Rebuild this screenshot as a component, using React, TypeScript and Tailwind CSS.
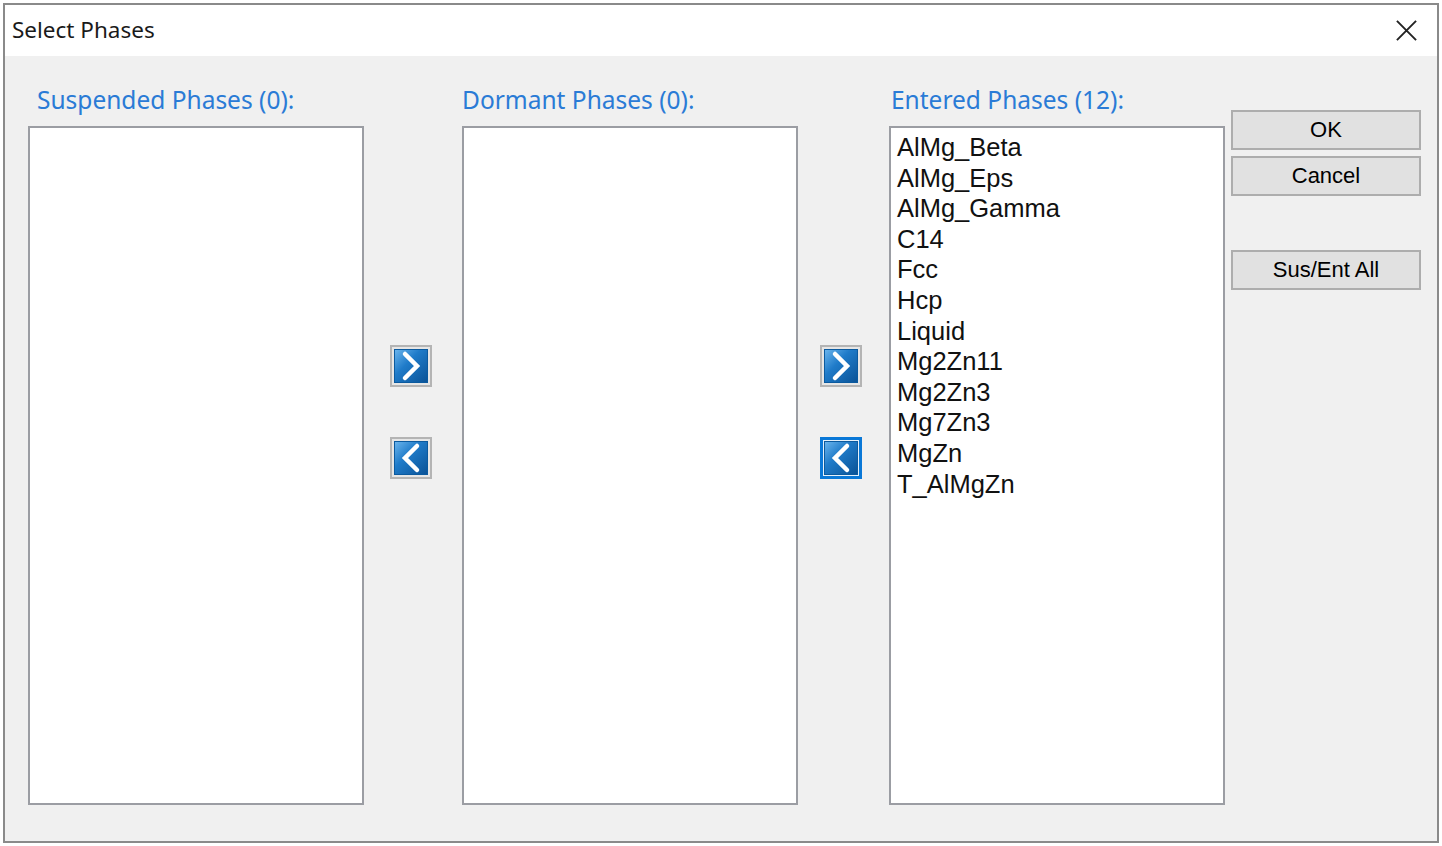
import React from "react";

const items = [
  "AlMg_Beta",
  "AlMg_Eps",
  "AlMg_Gamma",
  "C14",
  "Fcc",
  "Hcp",
  "Liquid",
  "Mg2Zn11",
  "Mg2Zn3",
  "Mg7Zn3",
  "MgZn",
  "T_AlMgZn",
];

function ArrowIcon({ dir, id }: { dir: "right" | "left"; id: string }) {
  return (
    <svg width="34" height="34" viewBox="0 0 34 34">
      <defs>
        <linearGradient id={id} x1="0" y1="0" x2="1" y2="1">
          <stop offset="0" stopColor="#6cb6ee" />
          <stop offset="0.4" stopColor="#1f7bc9" />
          <stop offset="1" stopColor="#0a5296" />
        </linearGradient>
      </defs>
      <rect x="0.5" y="0.5" width="33" height="33" fill={`url(#${id})`} stroke="#0b5a9f" />
      {dir === "right" ? (
        <polyline points="11,5 23,17 11,29" fill="none" stroke="#ffffff" strokeWidth="4.5" strokeLinecap="round" strokeLinejoin="miter" />
      ) : (
        <polyline points="23,5 11,17 23,29" fill="none" stroke="#ffffff" strokeWidth="4.5" strokeLinecap="round" strokeLinejoin="miter" />
      )}
    </svg>
  );
}

function ArrowButton({ dir, id, focused }: { dir: "right" | "left"; id: string; focused?: boolean }) {
  return (
    <div
      className={
        focused
          ? "w-[42px] h-[42px] border-[3px] border-[#0a78d7] bg-[#e5f1fb] flex items-center justify-center"
          : "w-[42px] h-[42px] border-2 border-[#b4b4b4] bg-[#e6e6e6] flex items-center justify-center"
      }
    >
      <ArrowIcon dir={dir} id={id} />
    </div>
  );
}

function Btn({ label }: { label: string }) {
  return (
    <div className="w-[190px] h-[40px] border-2 border-[#adadad] bg-[#e1e1e1] flex items-center justify-center text-[22px] text-black leading-none" style={{ fontFamily: '"Liberation Sans", Arial, sans-serif' }}>
      {label}
    </div>
  );
}

export default function App() {
  const seg = { fontFamily: '"Noto Sans", "Open Sans", sans-serif' };
  return (
    <div className="w-[1442px] h-[846px] bg-white pt-[3px] pl-[3px]">
      <div className="w-[1436px] h-[840px] border-2 border-[#8a8a8a] flex flex-col bg-[#f0f0f0]">
        {/* title bar */}
        <div className="h-[51px] bg-white flex items-center justify-between pl-[7px] pr-[19px] shrink-0">
          <span className="text-[22.5px] text-[#1a1a1a] leading-none" style={seg}>
            Select Phases
          </span>
          <svg width="23" height="23" viewBox="0 0 24 24">
            <path d="M2 2 L22 22 M22 2 L2 22" stroke="#222" strokeWidth="2" fill="none" />
          </svg>
        </div>
        {/* content */}
        <div className="flex-1 flex pl-[23px]">
          {/* col 1 */}
          <div className="w-[336px] flex flex-col">
            <div className="h-[70px] pt-[30px] pl-[9px]">
              <span className="text-[24.5px] leading-[28px] text-[#2a7bd6] whitespace-nowrap" style={seg}>
                Suspended Phases (0):
              </span>
            </div>
            <div className="h-[679px] bg-white border-2 border-[#9b9da3]" />
          </div>
          {/* arrows 1 */}
          <div className="w-[42px] ml-[26px] pt-[289px] flex flex-col gap-[50px]">
            <ArrowButton dir="right" id="g1" />
            <ArrowButton dir="left" id="g2" />
          </div>
          {/* col 2 */}
          <div className="w-[336px] ml-[30px] flex flex-col">
            <div className="h-[70px] pt-[30px]">
              <span className="text-[24.5px] leading-[28px] text-[#2a7bd6] whitespace-nowrap" style={seg}>
                Dormant Phases (0):
              </span>
            </div>
            <div className="h-[679px] bg-white border-2 border-[#9b9da3]" />
          </div>
          {/* arrows 2 */}
          <div className="w-[42px] ml-[22px] pt-[289px] flex flex-col gap-[50px]">
            <ArrowButton dir="right" id="g3" />
            <ArrowButton dir="left" id="g4" focused />
          </div>
          {/* col 3 */}
          <div className="w-[336px] ml-[27px] flex flex-col">
            <div className="h-[70px] pt-[30px] pl-[2px]">
              <span className="text-[24.5px] leading-[28px] text-[#2a7bd6] whitespace-nowrap" style={seg}>
                Entered Phases (12):
              </span>
            </div>
            <div className="h-[679px] bg-white border-2 border-[#9b9da3] pt-[4px] pl-[6px]">
              {items.map((it) => (
                <div
                  key={it}
                  className="text-[25.5px] leading-[30.6px] text-[#111]"
                  style={{ fontFamily: '"Liberation Sans", Arial, sans-serif' }}
                >
                  {it}
                </div>
              ))}
            </div>
          </div>
          {/* buttons */}
          <div className="ml-[6px] pt-[54px] flex flex-col">
            <Btn label="OK" />
            <div className="h-[6px]" />
            <Btn label="Cancel" />
            <div className="h-[54px]" />
            <Btn label="Sus/Ent All" />
          </div>
        </div>
      </div>
    </div>
  );
}
